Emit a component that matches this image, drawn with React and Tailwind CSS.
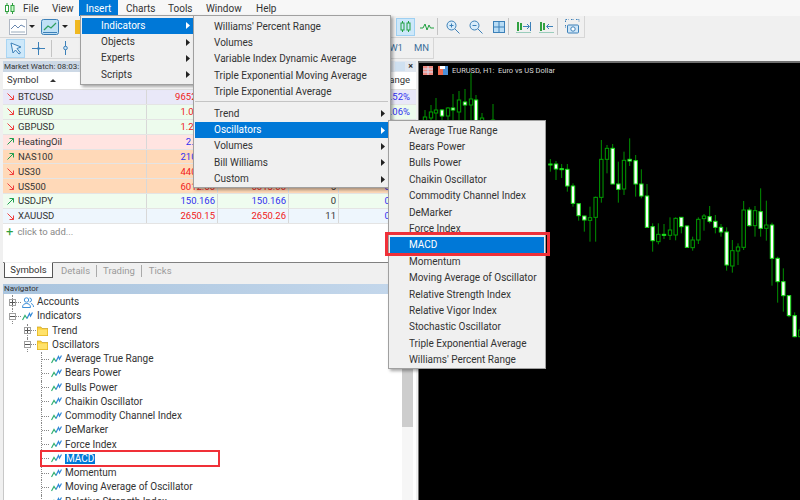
const FONT = { fontFamily: 'Roboto, "Liberation Sans", sans-serif' };

const symbols = [
  { name: 'BTCUSD', up: false, bid: '96520.40', ask: '96538.10', spread: '1770', pct: '0.52%', bg: 'bg-[#e9e8f8]', price: 'text-[#f02020]' },
  { name: 'EURUSD', up: false, bid: '1.05123', ask: '1.05135', spread: '12', pct: '0.06%', bg: 'bg-[#edfbed]', price: 'text-[#f02020]' },
  { name: 'GBPUSD', up: false, bid: '1.26123', ask: '1.26140', spread: '17', pct: '0.11%', bg: 'bg-[#edfbed]', price: 'text-[#f02020]' },
  { name: 'HeatingOil', up: true, bid: '2.3451', ask: '2.3490', spread: '39', pct: '0.20%', bg: 'bg-[#ffe4e1]', price: 'text-[#3030f0]' },
  { name: 'NAS100', up: true, bid: '21012.5', ask: '21014.0', spread: '15', pct: '0.31%', bg: 'bg-[#ffd9b8]', price: 'text-[#3030f0]' },
  { name: 'US30', up: false, bid: '44012.5', ask: '44015.5', spread: '30', pct: '0.14%', bg: 'bg-[#ffd9b8]', price: 'text-[#f02020]' },
  { name: 'US500', up: false, bid: '6012.50', ask: '6013.00', spread: '5', pct: '0.09%', bg: 'bg-[#ffd9b8]', price: 'text-[#f02020]' },
  { name: 'USDJPY', up: true, bid: '150.166', ask: '150.166', spread: '0', pct: '0.03%', bg: 'bg-[#effcef]', price: 'text-[#3030f0]' },
  { name: 'XAUUSD', up: false, bid: '2650.15', ask: '2650.26', spread: '11', pct: '0.02%', bg: 'bg-[#eef6fd]', price: 'text-[#f02020]' },
];

const menuItems = [
  { label: 'File', cls: 'w-[29px]' },
  { label: 'View', cls: 'w-[27px]' },
  { label: 'Insert', cls: 'w-[39px] justify-center bg-[#0078d7] text-white' },
  { label: 'Charts', cls: 'w-[50px] pl-[8px]' },
  { label: 'Tools', cls: 'w-[38px]' },
  { label: 'Window', cls: 'w-[50px]' },
  { label: 'Help', cls: 'w-[30px]' },
];
const insertItems = ['Indicators', 'Objects', 'Experts', 'Scripts'];
const indicatorsTop = ["Williams' Percent Range", 'Volumes', 'Variable Index Dynamic Average', 'Triple Exponential Moving Average', 'Triple Exponential Average'];
const indicatorsBottom = ['Trend', 'Oscillators', 'Volumes', 'Bill Williams', 'Custom'];
const oscillators = ['Average True Range', 'Bears Power', 'Bulls Power', 'Chaikin Oscillator', 'Commodity Channel Index', 'DeMarker', 'Force Index', 'MACD', 'Momentum', 'Moving Average of Oscillator', 'Relative Strength Index', 'Relative Vigor Index', 'Stochastic Oscillator', 'Triple Exponential Average', "Williams' Percent Range"];

// x, wick top, wick bottom, body top, body bottom, filled - read off the chart
const leftCandles = [
  [425, 110, 130, 117, 125, 0], [431, 105, 130, 112, 118, 0], [436, 98, 125, 110, 113, 0], [442, 109, 125, 110, 116, 1],
  [448, 107, 125, 108, 116, 0], [453, 94, 120, 108, 110, 1], [459, 91, 120, 100, 112, 0], [465, 89, 120, 102, 105, 1],
  [471, 73, 120, 99, 105, 0], [476, 95, 130, 100, 125, 1], [482, 113, 130, 118, 125, 0], [493, 104, 130, 120, 125, 0],
];
const rightCandles = [
  [31, 297, 335, 312, 315, 1], [48, 303, 360, 312, 327, 1], [65, 312, 354, 326, 328, 1], [82, 312, 395, 328, 378, 1],
  [99, 370, 440, 378, 430, 1], [116, 430, 482, 431, 467, 1], [133, 467, 515, 468, 480, 1], [150, 440, 545, 473, 481, 0],
  [167, 410, 545, 412, 472, 0], [184, 240, 428, 298, 412, 0], [201, 255, 340, 265, 298, 0], [218, 252, 372, 265, 372, 1],
  [235, 305, 428, 372, 388, 1], [252, 275, 405, 301, 387, 0], [269, 235, 318, 298, 303, 1], [287, 285, 410, 302, 372, 1],
  [304, 328, 415, 372, 408, 1], [321, 372, 502, 408, 502, 1], [338, 490, 575, 500, 542, 1], [355, 490, 553, 523, 545, 0],
  [372, 492, 537, 523, 525, 1], [390, 472, 540, 510, 526, 0], [407, 472, 541, 475, 525, 0], [424, 472, 520, 472, 500, 1],
  [441, 495, 563, 498, 562, 1], [458, 530, 572, 540, 563, 0], [475, 472, 552, 478, 540, 0], [492, 462, 512, 468, 476, 0],
  [509, 438, 490, 470, 484, 1], [526, 465, 520, 484, 502, 1], [543, 492, 530, 502, 516, 1], [560, 502, 632, 516, 615, 1],
  [577, 540, 638, 572, 618, 0], [594, 550, 615, 561, 573, 0], [611, 423, 570, 450, 562, 0], [628, 442, 500, 450, 497, 1],
  [645, 438, 530, 452, 497, 0], [662, 385, 530, 455, 505, 1], [679, 422, 542, 495, 505, 0], [696, 488, 677, 495, 595, 1],
  [713, 590, 728, 595, 665, 1], [730, 625, 755, 665, 707, 1], [747, 705, 772, 707, 767, 1], [764, 757, 832, 767, 830, 1],
  [781, 800, 835, 810, 830, 0],
].map(([x, a, b, c, d, f]) => [540 + x / 3, 60 + a / 3, 60 + b / 3, 60 + c / 3, 60 + d / 3, f]);

const Arrow = ({ up }) => (
  <svg width="7" height="7" viewBox="0 0 7 7" fill="none" stroke={up ? '#20a050' : '#f04040'} strokeWidth="1" className="shrink-0">
    {up ? <path d="M.5 6.500l6-6M2.500.5h4v4" /> : <path d="M.5.5l6 6M6.500 2.500v4h-4" />}
  </svg>
);

const IndicatorIcon = () => (
  <svg width="11" height="9" viewBox="0 0 11 9" fill="none" strokeWidth="1.2" className="shrink-0">
    <path d="M0.500 8 3 3.500 5 6.500" stroke="#30b070" />
    <path d="M5 6.500 7.500 1.500 8.500 4 10.500 0.500" stroke="#3088d8" />
  </svg>
);

const Folder = () => (
  <svg width="11" height="10" viewBox="0 0 11 10" className="shrink-0">
    <path d="M0 1h4l1 1.500h6V10H0z" fill="#ffd23a" stroke="#c8a020" strokeWidth="0.7" />
    <path d="M1 3.600h9V9H1z" fill="#ffe26a" />
  </svg>
);

const Accounts = () => (
  <svg width="12" height="11" viewBox="0 0 12 11" fill="none" stroke="#3d8fd8" strokeWidth="1" className="shrink-0">
    <circle cx="4.500" cy="3" r="2.200" />
    <path d="M0.500 10.500c0-3 2-4 4-4s4 1 4 4z" />
    <path d="M7.500 1a2 2 0 0 1 0 4M9 6.500c1.500.5 2.500 1.500 2.500 3.500" />
  </svg>
);

const Expander = ({ open }) => (
  <span className="relative flex h-full items-center">
    <span className="absolute inset-y-0 left-[3px] border-l border-dotted border-[#888]" />
    <span className="relative flex h-[7px] w-[7px] shrink-0 items-center justify-center border border-[#a0a0a0] bg-white">
      <span className="h-px w-[5px] bg-[#555]" />
      {!open && <span className="absolute h-[5px] w-px bg-[#555]" />}
    </span>
  </span>
);

const Guide = ({ className }) => <span className={`h-full shrink-0 border-l border-dotted border-[#888] ${className}`} />;
const Dash = ({ className }) => <span className={`h-px shrink-0 border-t border-dotted border-[#888] ${className}`} />;

const Candle = ({ c }) => {
  const [x, wt, wb, bt, bb, filled] = c;
  return (
    <g>
      <line x1={x} x2={x} y1={wt} y2={wb} stroke="#009000" strokeWidth="1" />
      <rect x={x - 1.7} y={bt} width="3.4" height={Math.max(bb - bt, 1)} fill={filled ? '#ffffff' : '#000000'} stroke={filled ? '#18e018' : '#00a000'} strokeWidth="1" />
    </g>
  );
};

const Caret = ({ color = '#222' }) => (
  <svg width="4" height="7" viewBox="0 0 4 7" className="shrink-0"><path d="M0 0l4 3.500L0 7z" fill={color} /></svg>
);

const Sep = () => <span className="mx-[3px] h-[17px] w-px shrink-0 bg-[#c4c4c4]" />;

const Toolbar1 = () => (
  <div className="flex h-[22px] w-[585px] items-center border-b border-r border-[#d6d6d6] bg-[#f0f0f0] pl-[9px]">
    <svg width="18" height="16" viewBox="0 0 18 16" fill="none" className="shrink-0"><rect x=".5" y=".5" width="17" height="15" fill="#fff" stroke="#b0b8c4" /><path d="M2 10 6 6l3 3 3-3 4 2" stroke="#6a88b0" /><path d="M2 13h14" stroke="#9ab" /></svg>
    <span className="ml-[2px] h-0 w-0 border-x-[3px] border-t-[3px] border-x-transparent border-t-[#222]" />
    <svg width="18" height="16" viewBox="0 0 18 16" fill="none" className="ml-[6px] shrink-0"><rect x=".5" y=".5" width="17" height="15" rx="2" fill="#bfe0f5" stroke="#3c80b8" /><path d="M3 11 7 7l3 2 5-5" stroke="#30a060" strokeWidth="1.200" /><path d="M2 13.500h14" stroke="#3c80b8" /></svg>
    <span className="ml-[3px] h-0 w-0 border-x-[3px] border-t-[3px] border-x-transparent border-t-[#222]" />
    <span className="ml-[7px] h-[14px] w-[10px] shrink-0 bg-[#f0b820]" />
    <div className="ml-auto flex items-center">
      <span className="flex h-[18px] w-[19px] items-center justify-center border border-[#9fd0f2] bg-[#cde8fa]">
        <svg width="11" height="11" viewBox="0 0 11 11" fill="none" stroke="#20a040"><path d="M2.500 0v2M2.500 9v2M8.500 0v2M8.500 9v2" /><rect x="1" y="2" width="3" height="7" /><rect x="7" y="2" width="3" height="7" /></svg>
      </span>
      <span className="ml-[5px] flex w-[14px] justify-center">
        <svg width="14" height="9" viewBox="0 0 14 9" fill="none" stroke="#20a040"><path d="M0 6h3l2-4 2 6 2-5 1.500 3H14" /></svg>
      </span>
      <Sep />
      <span className="ml-[5px] flex w-[14px]">
        <svg width="14" height="14" viewBox="0 0 14 14" fill="none" stroke="#3c80b8"><circle cx="5.500" cy="5.500" r="4.500" fill="#d8ecfa" /><path d="M9 9l4.500 4.500M3.500 5.500h4M5.500 3.500v4" /></svg>
      </span>
      <span className="ml-[9px] flex w-[14px]">
        <svg width="14" height="14" viewBox="0 0 14 14" fill="none" stroke="#3c80b8"><circle cx="5.500" cy="5.500" r="4.500" fill="#d8ecfa" /><path d="M9 9l4.500 4.500M3.500 5.500h4" /></svg>
      </span>
      <span className="ml-[10px] flex w-[12px]">
        <svg width="12" height="12" viewBox="0 0 12 12" fill="#b8dcf5" stroke="#3c80b8"><rect x=".5" y=".5" width="11" height="11" /><path d="M6 .5v11M.5 6h11" /></svg>
      </span>
      <Sep />
      <span className="ml-[4px] flex w-[15px]">
        <svg width="15" height="12" viewBox="0 0 15 12" fill="none"><path d="M2 1v9M5 2v7" stroke="#30a040" strokeWidth="2" /><path d="M7 5.500h6M11 3l2.500 2.500L11 8M14.500 1v9" stroke="#3c80b8" /><path d="M0 11.500h15" stroke="#9cb" /></svg>
      </span>
      <span className="ml-[8px] flex w-[15px]">
        <svg width="15" height="12" viewBox="0 0 15 12" fill="none"><path d="M2 1v9M5 2v7" stroke="#30a040" strokeWidth="2" /><path d="M14 5.500H8M10 3 7.500 5.500 10 8" stroke="#3c80b8" /><path d="M0 11.500h15" stroke="#9cb" /></svg>
      </span>
      <Sep />
      <span className="mx-[4px] flex w-[15px]">
        <svg width="15" height="15" viewBox="0 0 15 15" fill="none" stroke="#3c80b8"><path d="M.5 3V.5h3M6 .5h3M11 .5h3V3M.5 6v3" strokeDasharray="1.500 1" /><rect x="2.500" y="6" width="11" height="8" rx="1" fill="#cfe6f8" /><circle cx="8" cy="10" r="2.200" fill="#fff" /></svg>
      </span>
    </div>
  </div>
);

const Toolbar2 = () => (
  <div className="flex h-[21px] w-[434px] items-center border-b border-r border-[#d6d6d6] bg-[#f0f0f0] pl-[6px]">
    <span className="flex h-[19px] w-[19px] items-center justify-center border border-[#a9d5f3] bg-[#cde8fa]">
      <svg width="12" height="13" viewBox="0 0 12 13" fill="#e6f3fc" stroke="#3c80b8"><path d="M1 1l10 4-4 1.500 3.500 4.500-1.500 1L5.500 8 3 11z" /></svg>
    </span>
    <span className="ml-[7px] flex w-[13px]">
      <svg width="13" height="13" viewBox="0 0 13 13" fill="none" stroke="#3c80b8"><path d="M6.500 0v13M0 6.500h13" /><circle cx="6.500" cy="6.500" r="1" fill="#3c80b8" /></svg>
    </span>
    <span className="ml-[6px] mr-[9px] h-[17px] w-px bg-[#c4c4c4]" />
    <span className="ml-[2px] flex w-[5px]">
      <svg width="5" height="14" viewBox="0 0 5 14" fill="none" stroke="#3c80b8"><path d="M2.500 0v14" /><circle cx="2.500" cy="7" r="1.800" fill="#cfe6f8" /></svg>
    </span>
    <div className="ml-auto flex items-center pr-[4px] text-[9.5px] text-[#3c6f9a]">
      <span>W1</span>
      <span className="ml-[11px]">MN</span>
    </div>
  </div>
);

const MarketWatch = () => (
  <div className="flex h-[201px] shrink-0 flex-col">
    <div className="flex h-[11px] shrink-0 items-center bg-gradient-to-r from-[#c9d6e4] to-[#e2e8f0] pl-px">
      <span className="text-[8px] leading-none text-[#333]">Market Watch: 08:03:</span>
      <span className="ml-auto h-[9px] w-[10px] bg-[#cfe0f0]" />
      <span className="mx-[3px] text-[9px] font-bold leading-none text-[#333]">×</span>
    </div>
    <div className="flex h-[18px] shrink-0 items-center border-b border-[#e0e0e0] bg-white text-[9.5px] text-[#333]">
      <span className="flex w-[144px] items-center pl-[4px]">Symbol<span className="ml-[11px] h-0 w-0 border-x-[3px] border-b-[3px] border-x-transparent border-b-[#333]" /></span>
      <span className="w-[71px] text-right">Bid</span>
      <span className="w-[71px] text-right">Ask</span>
      <span className="w-[50px] text-right">!</span>
      <span className="w-[74px] pr-[3px] text-right">Change</span>
    </div>
    {symbols.map((s) => (
      <div key={s.name} className={`flex h-[14.9px] shrink-0 items-center border-b border-[#e4e4e4] text-[9.5px] leading-none ${s.bg}`}>
        <span className="flex h-full w-[144px] items-center gap-[4px] border-r border-[#d8d8d8] pl-[4px] text-[#333]"><Arrow up={s.up} />{s.name}</span>
        <span className={`flex h-full w-[71px] items-center justify-end border-r border-[#d8d8d8] pr-[2px] ${s.price}`}>{s.bid}</span>
        <span className={`flex h-full w-[71px] items-center justify-end border-r border-[#d8d8d8] pr-[2px] ${s.price}`}>{s.ask}</span>
        <span className="flex h-full w-[50px] items-center justify-end border-r border-[#d8d8d8] pr-[2px] text-[#333]">{s.spread}</span>
        <span className="flex h-full w-[74px] items-center justify-end pr-[3px] text-[#3030f0]">{s.pct}</span>
      </div>
    ))}
    <div className="flex h-[15px] shrink-0 items-center bg-white pl-[3px] text-[9.5px] leading-none text-[#888]">
      <span className="mr-[4px] text-[13px] leading-none text-[#30a040]">+</span>click to add...
    </div>
    <div className="flex-1 bg-white" />
  </div>
);

const Tabs = () => (
  <div className="flex h-[22px] shrink-0 items-start border-t border-[#808080] bg-[#f0f0f0] text-[9.5px] text-[#9a9a9a]">
    <span className="-mt-px ml-px flex h-[16px] w-[49px] items-center justify-center border border-[#555] border-t-[#f0f0f0] bg-white text-[#333]">Symbols</span>
    <span className="ml-[8px] mt-px">Details</span>
    <span className="ml-[6px] mt-[2px] h-[12px] w-px bg-[#aaa]" />
    <span className="ml-[6px] mt-px">Trading</span>
    <span className="ml-[6px] mt-[2px] h-[12px] w-px bg-[#aaa]" />
    <span className="ml-[7px] mt-px">Ticks</span>
  </div>
);

const TreeRow = ({ children }) => (
  <div className="flex h-[14.25px] items-center whitespace-nowrap text-[10px] leading-none text-[#333]">{children}</div>
);

const Navigator = () => (
  <div className="flex min-h-0 flex-1 flex-col">
    <div className="flex h-[10px] shrink-0 items-center bg-gradient-to-r from-[#a9c4de] to-[#c5d8ec] pl-px text-[8px] leading-none text-[#333]">Navigator</div>
    <div className="flex min-h-0 flex-1 border-l border-[#c8c8c8] bg-white">
      <div className="flex-1 overflow-hidden pt-px">
        <TreeRow><span className="ml-[5px] h-full"><Expander /></span><Dash className="w-[5px]" /><span className="ml-px"><Accounts /></span><span className="ml-[3px]">Accounts</span></TreeRow>
        <TreeRow><span className="ml-[5px] h-full"><Expander open /></span><Dash className="w-[5px]" /><span className="ml-px"><IndicatorIcon /></span><span className="ml-[4px]">Indicators</span></TreeRow>
        <TreeRow><span className="ml-[20px] h-full"><Expander /></span><Dash className="w-[5px]" /><span className="ml-px"><Folder /></span><span className="ml-[4px]">Trend</span></TreeRow>
        <TreeRow><span className="ml-[20px] h-full"><Expander open /></span><Dash className="w-[5px]" /><span className="ml-px"><Folder /></span><span className="ml-[4px]">Oscillators</span></TreeRow>
        {oscillators.slice(0, 11).map((name) => (
          <TreeRow key={name}>
            <Guide className="ml-[37px]" />
            <Dash className="w-[7px]" />
            <span className="ml-[2px]"><IndicatorIcon /></span>
            <span className={`ml-[3px] ${name === 'MACD' ? 'bg-[#0078d7] px-px text-white' : ''}`}>{name}</span>
          </TreeRow>
        ))}
      </div>
      <div className="flex w-[11px] flex-col bg-[#f6f6f6]">
        <div className="h-[133px] bg-[#cdcdcd]" />
      </div>
      <div className="w-[3px] bg-white" />
    </div>
  </div>
);

const MenuRow = ({ label, active, caret }) => (
  <div className={`flex h-[16.4px] items-center whitespace-nowrap pl-[19px] text-[10px] leading-none ${active ? 'bg-[#0078d7] text-white' : 'text-[#333]'}`}>
    {label}
    {caret && <span className="ml-auto mr-[3px]"><Caret color={active ? '#fff' : '#222'} /></span>}
  </div>
);

export default function App() {
  return (
    <div className="relative h-[500px] w-[800px] overflow-hidden bg-[#f0f0f0]" style={FONT}>
      <div className="flex h-[16px] items-center bg-[#f7f7f7] pl-[5px] text-[10px] text-[#333]">
        <svg width="10" height="11" viewBox="0 0 10 11" fill="none" stroke="#30a040" className="shrink-0"><path d="M2 0v11M7.500 0v11" /><rect x=".5" y="2.500" width="3" height="6" fill="#fff" /><rect x="6" y="2.500" width="3" height="6" fill="#cfc" /></svg>
        <div className="ml-[8px] flex">
          {menuItems.map((m) => (
            <span key={m.label} className={`flex h-[16px] items-center ${m.cls}`}>{m.label}</span>
          ))}
        </div>
      </div>
      <Toolbar1 />
      <Toolbar2 />

      <div className="mt-[2px] flex h-[439px]">
        <div className="ml-[3px] flex w-[413px] flex-col">
          <MarketWatch />
          <Tabs />
          <Navigator />
        </div>
        <div className="relative ml-[2px] flex-1 border-l border-t-2 border-[#707070] bg-black">
          <svg viewBox="419 63 381 437" className="block h-full w-full">
            {leftCandles.map((c) => <Candle key={c[0]} c={c} />)}
            {rightCandles.map((c) => <Candle key={c[0]} c={c} />)}
          </svg>
          <div className="absolute left-[4px] top-[3px] flex items-center">
            <svg width="10" height="9" viewBox="0 0 10 9" className="shrink-0"><rect width="10" height="9" fill="#f08a80" /><path d="M0 3h10M0 6h10M5 0v9" stroke="#cfe0f5" /></svg>
            <svg width="10" height="9" viewBox="0 0 10 9" className="ml-[5px] shrink-0"><rect width="5" height="9" fill="#f06a50" /><rect x="5" width="5" height="9" fill="#4a90d8" /><rect x="2" y="0" width="5" height="3" fill="#fff" /></svg>
            <span className="ml-[4px] whitespace-pre text-[7.5px] leading-none text-[#d8d8d8]">EURUSD, H1:  Euro vs US Dollar</span>
          </div>
        </div>
      </div>

      {/* open menus */}
      <div className="absolute left-[80px] top-[15px] z-10 h-[70px] w-[114px] border border-[#a0a0a0] bg-[#f0f0f0] pl-px pt-[1.5px] shadow-[2px_2px_3px_rgba(0,0,0,0.35)]">
        {insertItems.map((m, i) => (
          <MenuRow key={m} label={m} caret active={i === 0} />
        ))}
      </div>
      <div className="absolute left-[193px] top-[15px] z-20 h-[173px] w-[198px] border border-[#a0a0a0] bg-[#f0f0f0] pl-px pr-[2px] pt-[2.5px] shadow-[2px_2px_3px_rgba(0,0,0,0.35)]">
        {indicatorsTop.map((m) => <MenuRow key={m} label={m} />)}
        <div className="h-[5px] pt-[1px]"><div className="h-px bg-[#c4c4c4]" /></div>
        {indicatorsBottom.map((m) => <MenuRow key={m} label={m} caret active={m === 'Oscillators'} />)}
      </div>
      <div className="absolute left-[388px] top-[120px] z-30 h-[249px] w-[158px] border border-[#a0a0a0] bg-[#f0f0f0] px-px pt-[1.5px] shadow-[2px_2px_3px_rgba(0,0,0,0.35)]">
        {oscillators.map((m) => <MenuRow key={m} label={m} active={m === 'MACD'} />)}
      </div>

      {/* red callouts */}
      <div className="absolute left-[385px] top-[232px] z-40 h-[24px] w-[165px] border-[3px] border-[#f03038]" />
      <div className="absolute left-[40px] top-[450px] z-40 h-[17px] w-[180px] border-[2px] border-[#f03038]" />
    </div>
  );
}
